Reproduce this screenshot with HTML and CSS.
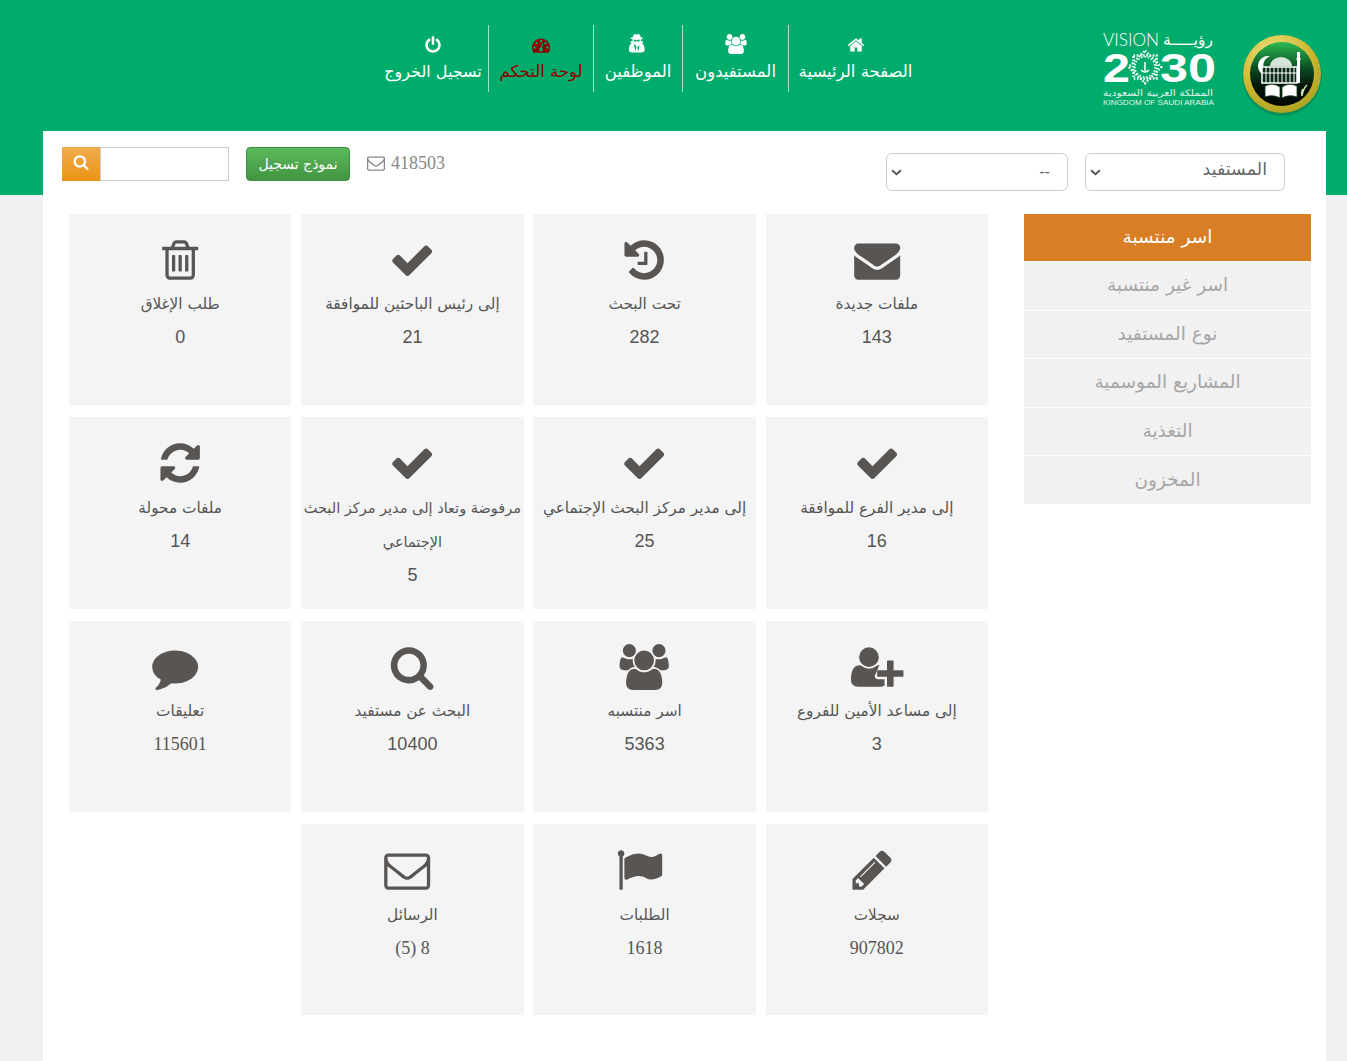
FILE: index.html
```html
<!DOCTYPE html>
<html lang="ar" dir="rtl">
<head>
<meta charset="utf-8">
<title>لوحة التحكم</title>
<link rel="stylesheet" href="styles.css">
</head>
<body>
<svg class="defs" aria-hidden="true">
  <defs>
    <symbol id="i-check" viewBox="0 0 1792 1792"><path d="M1671 566q0 40-28 68l-724 724-136 136q-28 28-68 28t-68-28l-136-136-362-362q-28-28-28-68t28-68l136-136q28-28 68-28t68 28l294 295 656-657q28-28 68-28t68 28l136 136q28 28 28 68z"/></symbol>
    <symbol id="i-envelope" viewBox="0 0 1792 1792"><path d="M1792 710v794q0 66-47 113t-113 47h-1472q-66 0-113-47t-47-113v-794q44 49 101 87 362 246 497 345 57 42 92.5 65.5t94.5 48 110 24.5h2q51 0 110-24.5t94.5-48 92.5-65.5q170-123 498-345 57-39 100-87zm0-294q0 79-49 151t-122 123q-376 261-468 325-10 7-42.5 30.5t-54 38-52 32.5-57.5 27-50 9h-2q-23 0-50-9t-57.5-27-52-32.5-54-38-42.5-30.5q-91-64-262-182.5t-205-142.5q-62-42-117-115.5t-55-136.5q0-78 41.5-130t118.5-52h1472q65 0 112.5 47t47.5 113z"/></symbol>
    <symbol id="i-envelope-o" viewBox="0 0 1792 1792"><path d="M1664 1504v-768q-32 36-69 66-268 206-426 338-51 43-83 67t-86.5 48.5-102.5 24.5h-2q-48 0-102.5-24.5t-86.5-48.5-83-67q-158-132-426-338-37-30-69-66v768q0 13 9.5 22.5t22.5 9.5h1472q13 0 22.5-9.5t9.5-22.5zm0-1051v-24.5l-.5-13-3-12.5-5.5-9-9-7.5-14-2.5h-1472q-13 0-22.5 9.5t-9.5 22.5q0 168 147 284 193 152 401 317 6 5 35 29.5t46 37.5 44.5 31.5 50.5 27.5 43 9h2q20 0 43-9t50.5-27.5 44.5-31.5 46-37.5 35-29.5q208-165 401-317 54-43 100.5-115.5t46.5-131.5zm128-37v1088q0 66-47 113t-113 47h-1472q-66 0-113-47t-47-113v-1088q0-66 47-113t113-47h1472q66 0 113 47t47 113z"/></symbol>
    <symbol id="i-search" viewBox="0 0 1792 1792"><path d="M1216 832q0-185-131.500-316.500t-316.500-131.500-316.500 131.500-131.500 316.500 131.500 316.500 316.500 131.500 316.500-131.500 131.500-316.500zm512 832q0 52-38 90t-90 38q-54 0-90-38l-343-342q-179 124-399 124-143 0-273.500-55.500t-225-150-150-225-55.500-273.500 55.500-273.500 150-225 225-150 273.500-55.500 273.500 55.500 225 150 150 225 55.500 273.500q0 220-124 399l343 343q37 37 37 90z"/></symbol>
    <symbol id="i-users" viewBox="-64 0 1920 1792"><path d="M529 896q-162 5-265 128h-134q-82 0-138-40.500t-56-118.500q0-353 124-353 6 0 43.500 21t97.500 42.500 119 21.500q67 0 133-23-5 37-5 66 0 139 81 256zm1071 637q0 120-73 189.500t-194 69.500h-874q-121 0-194-69.500t-73-189.500q0-53 3.500-103.500t14-109 26.500-108.500 43-97.500 62-81 85.500-53.500 111.500-20q10 0 43 21.500t73 48 107 48 135 21.500 135-21.500 107-48 73-48 43-21.500q61 0 111.500 20t85.500 53.500 62 81 43 97.500 26.500 108.500 14 109 3.500 103.500zm-1024-1277q0 106-75 181t-181 75-181-75-75-181 75-181 181-75 181 75 75 181zm704 384q0 159-112.500 271.500t-271.500 112.500-271.500-112.500-112.500-271.500 112.500-271.500 271.500-112.500 271.500 112.500 112.500 271.500zm576 225q0 78-56 118.500t-138 40.500h-134q-103-123-265-128 81-117 81-256 0-29-5-66 66 23 133 23 59 0 119-21.500t97.500-42.500 43.500-21q124 0 124 353zm-128-609q0 106-75 181t-181 75-181-75-75-181 75-181 181-75 181 75 75 181z"/></symbol>
    <symbol id="i-user-plus" viewBox="0 0 2048 1792"><path d="M704 896q-159 0-271.500-112.500t-112.500-271.500 112.500-271.500 271.500-112.500 271.500 112.500 112.500 271.500-112.500 271.500-271.500 112.500zm960 128h352q13 0 22.500 9.500t9.500 22.500v192q0 13-9.500 22.500t-22.500 9.500h-352v352q0 13-9.500 22.500t-22.500 9.500h-192q-13 0-22.500-9.500t-9.500-22.500v-352h-352q-13 0-22.500-9.500t-9.500-22.500v-192q0-13 9.500-22.500t22.500-9.500h352v-352q0-13 9.500-22.500t22.500-9.500h192q13 0 22.500 9.500t9.500 22.500v352zm-736 224q0 52 38 90t90 38h256v238q-68 50-171 50h-874q-121 0-193-73t-72-194q0-53 3.500-103.500t14-109 26.500-108.500 43-97.500 62-81 85.500-53.500 111.500-20q19 0 39 17 154 122 319 122t319-122q20-17 39-17 28 0 57 6-28 27-41 50t-13 56z"/></symbol>
    <symbol id="i-comment" viewBox="0 0 1792 1792"><path d="M1792 896q0 174-120 321.500t-326 233-450 85.500q-70 0-145-8-198 175-460 242-49 14-114 22-17 2-30.500-9t-17.500-29v-1q-3-4-.5-12t2-10 4.500-9.500l6-9 7-8.500 8-9q7-8 31-34.500t34.500-38 31-39.500 32.500-51 27-59 26-76q-157-89-247.500-220t-90.500-281q0-130 71-248.500t191-204.500 286-136.500 348-50.500q244 0 450 85.500t326 233 120 321.500z"/></symbol>
    <symbol id="i-pencil" viewBox="0 0 1536 1792"><path d="M363 1536l91-91-235-235-91 91v107h128v128h107zm523-928q0-22-22-22-10 0-17 7l-542 542q-7 7-7 17 0 22 22 22 10 0 17-7l542-542q7-7 7-17zm-54-192l416 416-832 832h-416v-416zm683 96q0 53-37 90l-166 166-416-416 166-165q36-38 90-38 53 0 91 38l235 234q37 39 37 91z"/></symbol>
    <symbol id="i-flag" viewBox="0 0 1792 1792"><path d="M320 256q0 72-64 110v1266q0 13-9.500 22.500t-22.500 9.500h-64q-13 0-22.500-9.500t-9.500-22.500v-1266q-64-38-64-110 0-53 37.500-90.500t90.500-37.500 90.500 37.500 37.500 90.500zm1472 64v763q0 25-12.500 38.500t-39.500 27.500q-215 116-369 116-61 0-123.500-22t-108.500-48-115.500-48-142.500-22q-192 0-464 146-17 9-33 9-26 0-45-19t-19-45v-742q0-32 31-55 21-14 79-43 236-120 421-120 107 0 200 29t219 88q38 19 88 19 54 0 117.500-21t110-47 88-47 54.500-21q26 0 45 19t19 45z"/></symbol>
    <symbol id="i-trash" viewBox="0 0 1792 1792"><path d="M704 736v576q0 14-9 23t-23 9h-64q-14 0-23-9t-9-23v-576q0-14 9-23t23-9h64q14 0 23 9t9 23zm256 0v576q0 14-9 23t-23 9h-64q-14 0-23-9t-9-23v-576q0-14 9-23t23-9h64q14 0 23 9t9 23zm256 0v576q0 14-9 23t-23 9h-64q-14 0-23-9t-9-23v-576q0-14 9-23t23-9h64q14 0 23 9t9 23zm128 724v-948h-896v948q0 22 7 40.500t14.500 27 10.500 8.500h832q3 0 10.500-8.500t14.500-27 7-40.500zm-672-1076h448l-48-117q-7-9-17-11h-317q-10 2-17 11zm928 32v64q0 14-9 23t-23 9h-96v948q0 83-47 143.500t-113 60.500h-832q-66 0-113-58.500t-47-141.500v-952h-96q-14 0-23-9t-9-23v-64q0-14 9-23t23-9h309l70-167q15-37 54-63t79-26h320q40 0 79 26t54 63l70 167h309q14 0 23 9t9 23z"/></symbol>
    <symbol id="i-history" viewBox="0 0 1536 1792"><path d="M1536 896q0 156-61 298t-164 245-245 164-298 61q-172 0-327-72.500t-264-204.500q-7-10-6.500-22.500t8.500-20.500l137-138q10-9 25-9 16 2 23 12 73 95 179 147t225 52q104 0 198.500-40.500t163.500-109.500 109.500-163.500 40.500-198.500-40.500-198.500-109.500-163.500-163.500-109.500-198.500-40.500q-98 0-188 35.500t-160 101.500l137 138q31 30 14 69-17 40-59 40h-448q-26 0-45-19t-19-45v-448q0-42 40-59 39-17 69 14l130 129q107-101 244.500-156.500t284.500-55.500q156 0 298 61t245 164 164 245 61 298zm-640-288v448q0 14-9 23t-23 9h-320q-14 0-23-9t-9-23v-64q0-14 9-23t23-9h224v-352q0-14 9-23t23-9h64q14 0 23 9t9 23z"/></symbol>
    <symbol id="i-refresh" viewBox="0 0 1792 1792"><path d="M1639 1056q0 5-1 7-64 268-268 434.500t-478 166.500q-146 0-282.500-55t-243.500-157l-129 129q-19 19-45 19t-45-19-19-45v-448q0-26 19-45t45-19h448q26 0 45 19t19 45-19 45l-137 137q71 66 161 102t187 36q134 0 250-65t186-179q11-17 53-117 8-23 30-23h192q13 0 22.500 9.500t9.500 22.500zm25-800v448q0 26-19 45t-45 19h-448q-26 0-45-19t-19-45 19-45l138-138q-148-137-349-137-134 0-250 65t-186 179q-11 17-53 117-8 23-30 23h-199q-13 0-22.500-9.500t-9.500-22.500v-7q65-268 270-434.500t480-166.500q146 0 284 55.500t245 156.500l130-129q19-19 45-19t45 19 19 45z"/></symbol>
    <symbol id="i-home" viewBox="0 0 1792 1792"><path d="M1472 992v480q0 26-19 45t-45 19h-384v-384h-256v384h-384q-26 0-45-19t-19-45v-480q0-1 .5-3t.5-3l575-474 575 474q1 2 1 6zm223-69l-62 74q-8 9-21 11h-3q-13 0-21-7l-692-577-692 577q-12 8-24 7-13-2-21-11l-62-74q-8-10-7-23.500t11-20.500l719-599q32-26 76-26t76 26l244 204v-195q0-14 9-23t23-9h192q14 0 23 9t9 23v408l219 182q10 8 11 21.500t-7 23.500z"/></symbol>
    <symbol id="i-power" viewBox="0 0 1792 1792"><path d="M1664 896q0 156-61 298t-164 245-245 164-298 61-298-61-245-164-164-245-61-298q0-182 80.500-343t226.500-270q43-32 95.500-25t83.500 50q32 42 24.500 94.500t-49.500 84.500q-98 74-151.500 181t-53.500 228q0 104 40.500 198.500t109.500 163.500 163.500 109.500 198.500 40.500 198.500-40.500 163.500-109.500 109.500-163.500 40.500-198.500q0-121-53.500-228t-151.500-181q-42-32-49.500-84.500t24.500-94.500q31-43 84-50t95 25q146 109 226.500 270t80.500 343zm-640-768v640q0 52-38 90t-90 38-90-38-38-90v-640q0-52 38-90t90-38 90 38 38 90z"/></symbol>
    <symbol id="i-dash" viewBox="0 0 1792 1792"><path d="M384 1152q0-53-37.500-90.500t-90.500-37.500-90.500 37.500-37.500 90.500 37.500 90.500 90.500 37.500 90.500-37.500 37.500-90.500zm192-448q0-53-37.500-90.500t-90.500-37.500-90.500 37.500-37.500 90.500 37.500 90.500 90.500 37.500 90.500-37.500 37.500-90.500zm428 481l101-382q6-26-7.500-48.500t-38.500-29.500-48 6.500-30 39.500l-101 382q-60 5-107 43.500t-63 98.500q-20 77 20 146t117 89 146-20 89-117q16-60-6-117t-72-91zm660-33q0-53-37.500-90.500t-90.500-37.500-90.500 37.500-37.500 90.500 37.500 90.500 90.500 37.500 90.500-37.500 37.500-90.500zm-640-640q0-53-37.500-90.500t-90.500-37.500-90.500 37.500-37.500 90.500 37.500 90.500 90.500 37.500 90.500-37.500 37.500-90.500zm448 192q0-53-37.500-90.500t-90.500-37.500-90.500 37.500-37.500 90.500 37.500 90.500 90.500 37.500 90.500-37.500 37.500-90.500zm320 448q0 261-141 483-19 29-54 29h-1402q-35 0-54-29-141-221-141-483 0-182 71-348t191-286 286-191 348-71 348 71 286 191 191 286 71 348z"/></symbol>
    <symbol id="i-secret" viewBox="0 0 1792 1792"><path d="M657 1536l96-448-96-128-128-64zm256 0l128-512-128 64-96 128zm160-1010q-2-4-4-6-10-8-96-8-70 0-167 19-7 2-21 2t-21-2q-97-19-167-19-86 0-96 8-2 2-4 6 2 18 4 27 2 3 7.500 6.500t7.500 10.500q2 4 7.500 20.500t7 20.500 7.500 17 8.500 17 9 14 12 13.500 14 9.500 17.500 8 20.500 4 24.500 2q36 0 59-12.500t32.500-30 14.500-34.500 11.500-29.500 17.500-12.500h12q11 0 17.500 12.500t11.500 29.500 14.500 34.500 32.500 30 59 12.500q13 0 24.500-2t20.500-4 17.500-8 14-9.500 12-13.500 9-14 8.500-17 7.500-17 7-20.500 7.500-20.500q2-7 7.500-10.500t7.500-6.500q2-9 4-27zm416 879q0 121-73 190t-194 69h-874q-121 0-194-69t-73-190q0-61 4.500-118t19-125.500 37.500-123.500 63.500-103.500 93.500-74.500l-90-220h214q-22-64-22-128 0-12 2-32-194-40-194-96 0-57 210-99 17-62 51.500-134t70.500-114q32-37 76-37 30 0 84 31t84 31 84-31 84-31q44 0 76 36 36 42 70.500 114t51.500 134q210 42 210 99 0 56-194 96 7 81-20 160h214l-82 225q63 33 107.500 96.500t65.500 143.500 29 151.500 8 148.500z"/></symbol>
    <radialGradient id="gold" cx="40%" cy="30%" r="75%">
      <stop offset="0" stop-color="#f4e98a"/><stop offset=".65" stop-color="#cdb52f"/><stop offset="1" stop-color="#a8a022"/>
    </radialGradient>
    <linearGradient id="core" x1="0" y1="0" x2="0" y2="1">
      <stop offset="0" stop-color="#2dbb52"/><stop offset=".42" stop-color="#0b4a22"/><stop offset=".7" stop-color="#04140a"/><stop offset="1" stop-color="#020604"/>
    </linearGradient>
  </defs>
</svg>

<header class="top">
  <svg class="seal" viewBox="0 0 80 84" role="img" aria-label="الشعار">
    <circle cx="40" cy="42" r="40" fill="#06794a" opacity=".5"/>
    <circle cx="40" cy="40" r="39" fill="url(#gold)"/>
    <circle cx="40" cy="40" r="32" fill="url(#core)"/>
    <path d="M28 22.200A10 10 0 1 0 28 41.800A10.500 10.500 0 0 1 28 22.200z" fill="#fff"/>
    <path d="M20 33h35v16H20z" fill="#0d2a17" stroke="#fff" stroke-width="1.500"/>
    <path d="M24 33v16M28 33v16M32 33v16M36 33v16M40 33v16M44 33v16M48 33v16M52 33v16M20 39h35" stroke="#fff" stroke-width="1"/>
    <path d="M28 32a11 9 0 0 1 22 0z" fill="#d5e5d8"/>
    <path d="M55 49V18h3v31z" fill="#fff"/>
    <path d="M54.500 25h4" stroke="#fff" stroke-width="2"/>
    <path d="M23 52q8-4 15 1v11q-7-4-15-1zM55 52q-8-4-15 1v11q7-4 15-1z" fill="#fff" stroke="#0a3a1c" stroke-width=".8"/>
    <path d="M60 62q1-7 5-11M60 62q-1-4 1-7" stroke="#c7e3b4" stroke-width="1.500" fill="none"/>
  </svg>
  <svg class="vision" viewBox="0 0 114 80" role="img" aria-label="رؤية 2030">
    <text class="v-vision" x="1" y="17" textLength="56" lengthAdjust="spacingAndGlyphs">VISION</text>
    <text class="v-roya" x="61" y="16" textLength="50" lengthAdjust="spacingAndGlyphs">رؤيـــــة</text>
    <text class="v-num" x="1" y="53" textLength="27" lengthAdjust="spacingAndGlyphs">2</text>
    <text class="v-num" x="58" y="53" textLength="56" lengthAdjust="spacingAndGlyphs">30</text>
    <rect x="31.500" y="26.500" width="23" height="23" class="v-star"/>
    <rect x="31.500" y="26.500" width="23" height="23" class="v-star" transform="rotate(45 43 38)"/>
    <circle cx="43" cy="38" r="10" fill="none" stroke="#fff" stroke-width="1.500" stroke-dasharray="1.500 1.800"/>
    <path d="M43 33v9M39 41q4 4 8 0" stroke="#fff" stroke-width="1.500" fill="none"/>
    <text class="v-ar" x="1" y="67" textLength="110" lengthAdjust="spacingAndGlyphs">المملكة العربية السعودية</text>
    <text class="v-en" x="1" y="76" textLength="111" lengthAdjust="spacingAndGlyphs">KINGDOM OF SAUDI ARABIA</text>
  </svg>
  <nav class="nav">
    <a class="nav-item"><svg class="nav-icon"><use href="#i-home"/></svg><span>الصفحة الرئيسية</span></a>
    <a class="nav-item"><svg class="nav-icon nav-icon-lg"><use href="#i-users"/></svg><span>المستفيدون</span></a>
    <a class="nav-item"><svg class="nav-icon nav-icon-lg"><use href="#i-secret"/></svg><span>الموظفين</span></a>
    <a class="nav-item nav-active"><svg class="nav-icon"><use href="#i-dash"/></svg><span>لوحة التحكم</span></a>
    <a class="nav-item"><svg class="nav-icon"><use href="#i-power"/></svg><span>تسجيل الخروج</span></a>
  </nav>
</header>

<main class="panel">
  <div class="toolbar">
    <select class="sel sel-a"><option>المستفيد</option></select>
    <select class="sel sel-b"><option>--</option></select>
    <div class="tools">
      <span class="count"><span>418503</span><svg class="count-icon"><use href="#i-envelope-o"/></svg></span>
      <button class="btn-green" type="button">نموذج تسجيل</button>
      <div class="search">
        <input class="search-input" type="text" aria-label="بحث">
        <button class="search-btn" type="button" aria-label="بحث"><svg class="search-icon"><use href="#i-search"/></svg></button>
      </div>
    </div>
  </div>

  <div class="content">
    <aside class="side">
      <a class="side-item side-active">اسر منتسبة</a>
      <a class="side-item">اسر غير منتسبة</a>
      <a class="side-item">نوع المستفيد</a>
      <a class="side-item">المشاريع الموسمية</a>
      <a class="side-item">التغذية</a>
      <a class="side-item">المخزون</a>
    </aside>

    <section class="grid">
      <a class="card"><svg class="card-icon"><use href="#i-envelope"/></svg><p class="label">ملفات جديدة</p><p class="num">143</p></a>
      <a class="card"><svg class="card-icon"><use href="#i-history"/></svg><p class="label">تحت البحث</p><p class="num">282</p></a>
      <a class="card"><svg class="card-icon"><use href="#i-check"/></svg><p class="label">إلى رئيس الباحثين للموافقة</p><p class="num">21</p></a>
      <a class="card"><svg class="card-icon"><use href="#i-trash"/></svg><p class="label">طلب الإغلاق</p><p class="num">0</p></a>

      <a class="card"><svg class="card-icon"><use href="#i-check"/></svg><p class="label">إلى مدير الفرع للموافقة</p><p class="num">16</p></a>
      <a class="card"><svg class="card-icon"><use href="#i-check"/></svg><p class="label">إلى مدير مركز البحث الإجتماعي</p><p class="num">25</p></a>
      <a class="card"><svg class="card-icon"><use href="#i-check"/></svg><p class="label label-tight">مرفوضة وتعاد إلى مدير مركز البحث الإجتماعي</p><p class="num">5</p></a>
      <a class="card"><svg class="card-icon"><use href="#i-refresh"/></svg><p class="label">ملفات محولة</p><p class="num">14</p></a>

      <a class="card"><svg class="card-icon"><use href="#i-user-plus"/></svg><p class="label">إلى مساعد الأمين للفروع</p><p class="num">3</p></a>
      <a class="card"><svg class="card-icon"><use href="#i-users"/></svg><p class="label">اسر منتسبه</p><p class="num">5363</p></a>
      <a class="card"><svg class="card-icon"><use href="#i-search"/></svg><p class="label">البحث عن مستفيد</p><p class="num">10400</p></a>
      <a class="card"><svg class="card-icon card-icon-off"><use href="#i-comment"/></svg><p class="label">تعليقات</p><p class="num num-serif">115601</p></a>

      <a class="card"><svg class="card-icon card-icon-off"><use href="#i-pencil"/></svg><p class="label">سجلات</p><p class="num num-serif">907802</p></a>
      <a class="card"><svg class="card-icon card-icon-off"><use href="#i-flag"/></svg><p class="label">الطلبات</p><p class="num num-serif">1618</p></a>
      <a class="card"><svg class="card-icon card-icon-off"><use href="#i-envelope-o"/></svg><p class="label">الرسائل</p><p class="num num-serif" dir="ltr">(5) 8</p></a>
    </section>
  </div>
</main>
</body>
</html>
```

FILE: styles.css
```css
* { box-sizing: border-box; }
html, body { margin: 0; padding: 0; }
body {
  background: #f1f1f1;
  color: #555;
  font-family: "DejaVu Sans", "Liberation Sans", sans-serif;
  height: 1061px;
  overflow: hidden;
}
.defs { position: absolute; width: 0; height: 0; overflow: hidden; }
a { color: inherit; text-decoration: none; }

.top {
  background: #00ac6b;
  height: 195px;
  display: flex;
  align-items: flex-start;
  padding: 0 25px 0 0;
}
.seal { width: 80px; height: 84px; margin-top: 34px; flex: none; }
.vision { width: 114px; height: 80px; margin: 29px 26px 0 0; flex: none; }
.v-vision { font: 300 18px Lato, sans-serif; fill: #fff; direction: ltr; }
.v-roya { font: 15px "DejaVu Sans", sans-serif; fill: #fff; direction: ltr; }
.v-num { font: bold 41px "Liberation Sans", sans-serif; fill: #fff; direction: ltr; }
.v-star { fill: none; stroke: #fff; stroke-width: 2.5; stroke-dasharray: 1.6 1.6; }
.v-ar { font: 9px "DejaVu Sans", sans-serif; fill: #e3f5ec; direction: ltr; }
.v-en { font: 8px "Liberation Sans", sans-serif; fill: #e3f5ec; direction: ltr; }

.nav {
  display: grid;
  grid-template-columns: 134px 106px 89px 105px 110px;
  margin: 25px 180px 0 0;
}
.nav-item {
  height: 67px;
  padding: 11px 0 0;
  color: #fff;
  display: flex;
  flex-direction: column;
  align-items: center;
  font-size: 16.5px;
  line-height: 20px;
  border-left: 1px solid rgba(255, 255, 255, .65);
  white-space: nowrap;
}
.nav-item:last-child { border-left: 0; font-size: 16px; }
.nav-active { color: #8b0000; }
.nav-icon { width: 18px; height: 18px; margin-bottom: 8px; fill: currentColor; }
.nav-icon-lg { width: 22px; height: 20px; margin: -2px 0 8px; }

.panel {
  background: #fff;
  margin: -64px 21px 0 43px;
  position: relative;
  height: 930px;
}
.toolbar { display: flex; height: 83px; padding: 22px 41px 0 19px; gap: 17px; align-items: flex-start; }
.sel {
  height: 38px;
  appearance: none;
  background: #fff url("data:image/svg+xml,%3Csvg xmlns='http://www.w3.org/2000/svg' viewBox='0 0 10 6'%3E%3Cpath d='M1 1l4 3.500 4-3.500' fill='none' stroke='%23555' stroke-width='1.800'/%3E%3C/svg%3E") no-repeat 4px center / 11px 7px;
  border: 1px solid #ccc;
  border-radius: 6px;
  color: #666;
  font: 17.5px "DejaVu Sans", sans-serif;
  padding: 0 17px 6px 20px;
}
.sel-a { width: 200px; }
.sel-b { width: 182px; font-size: 15px; padding-right: 17px; padding-bottom: 0; }
.tools { display: flex; margin: -6px auto 0 0; gap: 17px; align-items: center; height: 34px; }
.count { display: flex; gap: 6px; align-items: center; font: 18px "Liberation Serif", serif; color: #888; padding-bottom: 2px; }
.count-icon { width: 18px; height: 18px; fill: #888; }
.btn-green {
  width: 104px;
  height: 34px;
  border: 1px solid #3d8b3d;
  border-radius: 4px;
  background: linear-gradient(#5cb85c, #419641);
  color: #fff;
  font: 14px "DejaVu Sans", sans-serif;
  padding: 0;
}
.search { display: flex; }
.search-input { width: 129px; height: 34px; border: 1px solid #ccc; background: #fff; padding: 0 6px; }
.search-btn {
  width: 38px;
  height: 34px;
  border: 0;
  background: linear-gradient(#f0ad4e, #eb9316);
  padding: 0 0 4px;
  display: flex;
  align-items: center;
  justify-content: center;
}
.search-icon { width: 16px; height: 16px; fill: #fff; }

.content { display: flex; padding: 0 15px 0 26px; gap: 36px; align-items: flex-start; }
.side { width: 287px; flex: none; background: #f1f1f1; }
.side-item {
  display: flex;
  align-items: center;
  justify-content: center;
  height: 48.6px;
  border-top: 1px solid #fff;
  padding-bottom: 2px;
  color: #a6a6a6;
  font-size: 18.5px;
}
.side-active { height: 47px; border: 0; background: #d87e24; color: #fff; }

.grid {
  flex: 1;
  display: grid;
  grid-template-columns: repeat(4, 1fr);
  grid-auto-rows: 191.3px;
  gap: 12.1px 9.9px;
}
.card {
  background: #f4f4f4;
  padding-top: 23px;
  text-align: center;
  display: block;
}
.card-icon { display: block; width: 100%; height: 46px; margin-bottom: 4.4px; fill: #595553; }
.card-icon-off { padding-right: 10px; }
.label { margin: 0; font-size: 15.3px; line-height: 34px; color: #555; }
.label-tight { font-size: 14.5px; }
.num { margin: 0; font: 18px/32px "Liberation Sans", sans-serif; color: #555; }
.num-serif { font-family: "Liberation Serif", serif; }
```
